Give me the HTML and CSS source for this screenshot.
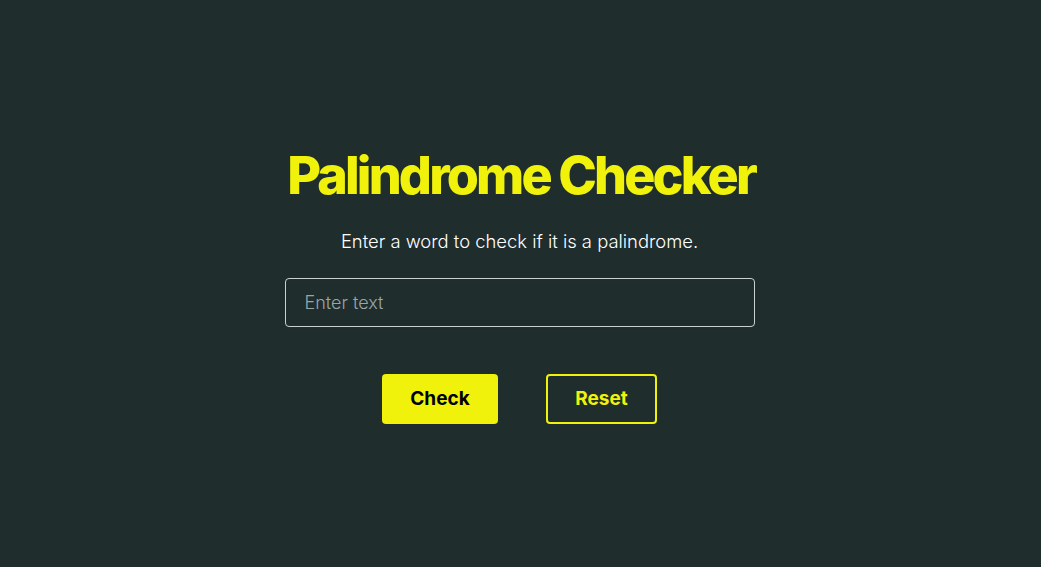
FILE: index.html
```html
<!DOCTYPE html>
<html lang="en">
<head>
<meta charset="utf-8">
<title>Palindrome Checker</title>
<link rel="stylesheet" href="styles.css">
</head>
<body>
<main class="app">
  <h1 class="title">Palindrome Checker</h1>
  <p class="subtitle">Enter a word to check if it is a palindrome.</p>
  <input class="text-input" type="text" placeholder="Enter text">
  <div class="actions">
    <button class="btn btn-primary" type="button">Check</button>
    <button class="btn btn-outline" type="button">Reset</button>
  </div>
</main>
</body>
</html>
```
FILE: styles.css
```css
html, body {
  margin: 0;
  padding: 0;
  height: 100%;
}
body {
  background: #1f2d2d;
  font-family: Inter, "Liberation Sans", sans-serif;
  color: #ffffff;
}
.app {
  min-height: 100%;
  display: flex;
  flex-direction: column;
  align-items: center;
  justify-content: center;
  box-sizing: border-box;
  padding: 2px 2px 0 0;
}
.title {
  margin: 0 0 0 3px;
  font-size: 52px;
  font-weight: 800;
  letter-spacing: -0.055em;
  color: #f0f20c;
  line-height: 1.2;
}
.subtitle {
  margin: 22px 0 0;
  font-size: 18.4px;
  font-weight: 300;
  color: #ffffff;
}
.text-input {
  margin-top: 26px;
  width: 470px;
  height: 49px;
  box-sizing: border-box;
  background: transparent;
  border: 1px solid #c9d1d1;
  border-radius: 4px;
  padding: 0 19px;
  font-family: inherit;
  font-size: 18px;
  font-weight: 300;
  color: #ffffff;
  outline: none;
}
.text-input::placeholder {
  color: #9aa5a5;
}
.actions {
  margin-top: 47px;
  display: flex;
  gap: 48px;
}
.btn {
  height: 50px;
  box-sizing: border-box;
  border-radius: 4px;
  font-family: inherit;
  font-size: 19px;
  font-weight: 700;
  cursor: pointer;
}
.btn-primary {
  width: 116px;
  background: #f0f20c;
  border: none;
  color: #000000;
}
.btn-outline {
  width: 111px;
  background: transparent;
  border: 2px solid #f0f20c;
  color: #f0f20c;
}
```
